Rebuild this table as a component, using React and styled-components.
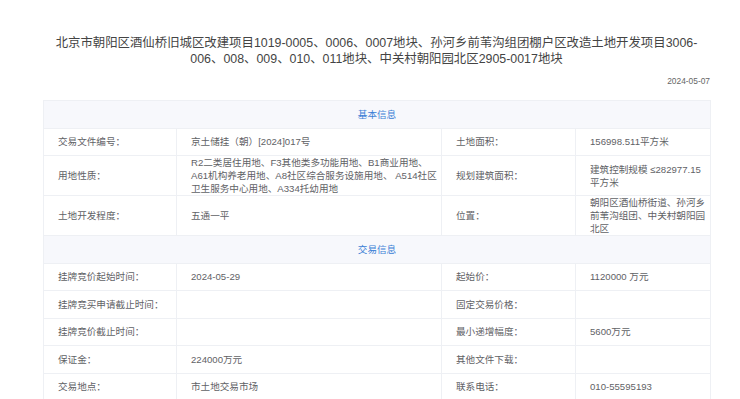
import React from 'react';
import styled, { createGlobalStyle } from 'styled-components';

const GlobalStyle = createGlobalStyle`
  body {
    margin: 0;
    background: #fff;
    font-family: "Liberation Sans", "Noto Sans CJK SC", sans-serif;
  }
`;

const Page = styled.div`
  padding: 35px 30px 0 43px;
`;

const Title = styled.h1`
  margin: 0;
  font-size: 12.4px;
  line-height: 16px;
  font-weight: 400;
  color: #444;
  text-align: center;
`;

const PubDate = styled.div`
  margin: 8px 0 13px;
  text-align: right;
  font-size: 8.4px;
  line-height: 12px;
  color: #666;
`;

const InfoTable = styled.table`
  width: 667px;
  table-layout: fixed;
  border-collapse: collapse;
  font-size: 9.6px;
  line-height: 13px;
  color: #5f6266;

  td,
  th {
    border: 1px solid #eef0f4;
    height: 26.5px;
    padding: 0 3px 0 14px;
    vertical-align: middle;
    text-align: left;
    font-weight: normal;
    white-space: nowrap;
  }

  .col-label {
    width: 133px;
  }

  .col-value {
    width: 265px;
  }

  .col-label2 {
    width: 134px;
  }

  .col-value2 {
    width: 135px;
  }
`;

const SectionHead = styled.th`
  && {
    background: #f7f8fc;
    color: #3b7fd6;
    text-align: center;
    padding: 0;
  }
`;

const Label = styled.th``;

const Value = styled.td``;

const Section = ({ title }) => (
  <tr>
    <SectionHead colSpan="4">{title}</SectionHead>
  </tr>
);

const Row = ({ label, value, label2, value2 }) => (
  <tr>
    <Label scope="row">{label}</Label>
    <Value>{value}</Value>
    <Label scope="row">{label2}</Label>
    <Value>{value2}</Value>
  </tr>
);

const App = () => (
  <Page>
    <GlobalStyle />
    <Title>
      北京市朝阳区酒仙桥旧城区改建项目1019-0005、0006、0007地块、孙河乡前苇沟组团棚户区改造土地开发项目3006-
      <br />
      006、008、009、010、011地块、中关村朝阳园北区2905-0017地块
    </Title>
    <PubDate>2024-05-07</PubDate>

    <InfoTable>
      <colgroup>
        <col className="col-label" />
        <col className="col-value" />
        <col className="col-label2" />
        <col className="col-value2" />
      </colgroup>
      <tbody>
        <Section title="基本信息" />
        <Row
          label="交易文件编号："
          value="京土储挂（朝）[2024]017号"
          label2="土地面积："
          value2="156998.511平方米"
        />
        <Row
          label="用地性质："
          value={
            <>
              R2二类居住用地、F3其他类多功能用地、B1商业用地、
              <br />
              A61机构养老用地、A8社区综合服务设施用地、 A514社区
              <br />
              卫生服务中心用地、A334托幼用地
            </>
          }
          label2="规划建筑面积："
          value2={
            <>
              建筑控制规模 ≤282977.15
              <br />
              平方米
            </>
          }
        />
        <Row
          label="土地开发程度："
          value="五通一平"
          label2="位置："
          value2={
            <>
              朝阳区酒仙桥街道、孙河乡
              <br />
              前苇沟组团、中关村朝阳园
              <br />
              北区
            </>
          }
        />
        <Section title="交易信息" />
        <Row
          label="挂牌竞价起始时间："
          value="2024-05-29"
          label2="起始价："
          value2="1120000 万元"
        />
        <Row label="挂牌竞买申请截止时间：" value="" label2="固定交易价格：" value2="" />
        <Row label="挂牌竞价截止时间：" value="" label2="最小递增幅度：" value2="5600万元" />
        <Row label="保证金：" value="224000万元" label2="其他文件下载：" value2="" />
        <Row
          label="交易地点："
          value="市土地交易市场"
          label2="联系电话："
          value2="010-55595193"
        />
      </tbody>
    </InfoTable>
  </Page>
);

export default App;
